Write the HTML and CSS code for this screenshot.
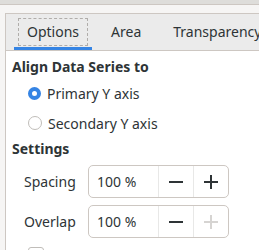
FILE: index.html
```html
<!DOCTYPE html>
<html>
<head>
    <title>Data Series Options</title>
    <link rel="stylesheet" href="styles.css">
</head>
<body>
    <div class="topbar"></div>
    <div class="notebook">
        <div class="tabs">
            <div class="tab active"><span class="focus">Options</span></div>
            <div class="tab">Area</div>
            <div class="tab">Transparency</div>
        </div>
        <div class="page">
            <h3>Align Data Series to</h3>
            <div class="radio-list">
                <label class="radio"><span class="dot checked"></span>Primary Y axis</label>
                <label class="radio"><span class="dot"></span>Secondary Y axis</label>
            </div>
            <h3>Settings</h3>
            <div class="spin-row">
                <span class="spin-label">Spacing</span>
                <div class="spin">
                    <span class="spin-value">100 %</span>
                    <span class="spin-btn">
                        <svg width="14" height="14" viewBox="0 0 14 14"><path d="M0 7h14" stroke="currentColor" stroke-width="2"/></svg>
                    </span>
                    <span class="spin-btn">
                        <svg width="14" height="14" viewBox="0 0 14 14"><path d="M0 7h14M7 0v14" stroke="currentColor" stroke-width="2"/></svg>
                    </span>
                </div>
            </div>
            <div class="spin-row">
                <span class="spin-label">Overlap</span>
                <div class="spin">
                    <span class="spin-value">100 %</span>
                    <span class="spin-btn">
                        <svg width="14" height="14" viewBox="0 0 14 14"><path d="M0 7h14" stroke="currentColor" stroke-width="2"/></svg>
                    </span>
                    <span class="spin-btn disabled">
                        <svg width="14" height="14" viewBox="0 0 14 14"><path d="M0 7h14M7 0v14" stroke="currentColor" stroke-width="2"/></svg>
                    </span>
                </div>
            </div>
            <div class="check-row"><span class="check"></span></div>
        </div>
    </div>
</body>
</html>
```

FILE: styles.css
```css
body {
    margin: 0;
    width: 259px;
    height: 250px;
    overflow: hidden;
    background-color: #f6f5f4;
    font-family: "Noto Sans", sans-serif;
    font-size: 14px;
    color: #2e3436;
}
.topbar {
    height: 4px;
    background-color: #deddda;
    border-bottom: 1px solid #cdc7c2;
}
.notebook {
    margin: 8px 0 0 5px;
    border-top: 1px solid #cdc7c2;
    border-left: 1px solid #cdc7c2;
    background-color: #ffffff;
    height: 236px;
    overflow: hidden;
}
.tabs {
    display: flex;
    gap: 6px;
    height: 36px;
    padding-left: 8px;
    background-color: #ebebeb;
    border-bottom: 1px solid #cdc7c2;
    white-space: nowrap;
}
.tab {
    display: flex;
    align-items: center;
    padding: 0 13px;
    line-height: 20px;
}
.tab.active {
    box-shadow: inset 0 -3px 0 #3584e4;
    padding: 0 4px;
}
.focus {
    display: block;
    padding: 3px 8px 3px 8px;
    margin-bottom: 1px;
    border: 1px dashed #b0adaa;
}
.page {
    padding: 0 0 0 6px;
}
h3 {
    margin: 0;
    font-size: 14px;
    font-weight: bold;
    line-height: 20px;
}
.page h3:first-child {
    margin-top: 6px;
}
.radio-list {
    margin: 1px 0 1px 0;
}
.radio {
    display: flex;
    align-items: center;
    height: 30px;
    padding-left: 16px;
    gap: 6px;
}
.dot {
    width: 12px;
    height: 12px;
    border-radius: 50%;
    border: 1px solid #c0bdb9;
    background-color: #ffffff;
}
.dot.checked {
    width: 5px;
    height: 5px;
    border: 4.5px solid #3584e4;
}
.spin-row {
    display: flex;
    align-items: center;
    margin-top: 6px;
    padding-left: 12px;
}
.spin-row + .spin-row {
    margin-top: 7px;
}
.spin-label {
    width: 64px;
}
.spin {
    display: flex;
    height: 31px;
    border: 1px solid #cdc7c2;
    border-radius: 5px;
    background-color: #ffffff;
}
.spin-value {
    width: 61px;
    padding-left: 8px;
    line-height: 31px;
    border-right: 1px solid #e8e8e7;
}
.spin-btn {
    display: flex;
    align-items: center;
    justify-content: center;
    width: 34px;
    color: #2e3436;
}
.spin-btn + .spin-btn {
    border-left: 1px solid #e8e8e7;
}
.spin-btn.disabled {
    color: #d6d4d2;
}
.check-row {
    margin-top: 9px;
    padding-left: 16px;
}
.check {
    display: block;
    width: 14px;
    height: 14px;
    border: 1px solid #c0bdb9;
    border-radius: 3px;
}
```
